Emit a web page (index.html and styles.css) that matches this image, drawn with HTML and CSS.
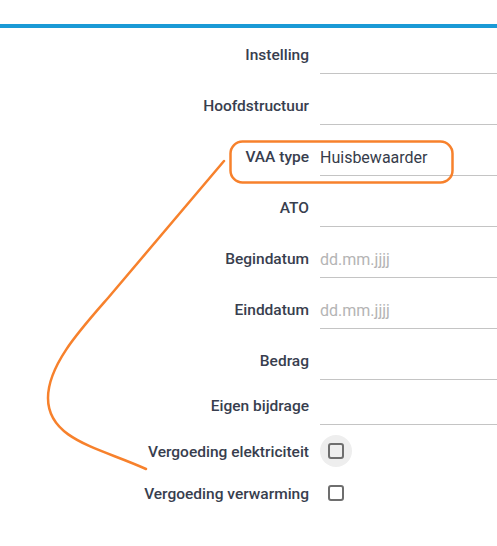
FILE: index.html
```html
<!DOCTYPE html>
<html lang="nl">
<head>
<meta charset="utf-8">
<title>VAA formulier</title>
<link rel="stylesheet" href="styles.css">
</head>
<body>
<div class="page">
  <div class="topbar"></div>
  <form class="form">
    <div class="field">
      <label class="label" for="f1">Instelling</label>
      <input class="input" id="f1" type="text">
    </div>
    <div class="field">
      <label class="label" for="f2">Hoofdstructuur</label>
      <input class="input" id="f2" type="text">
    </div>
    <div class="field">
      <label class="label" for="f3">VAA type</label>
      <input class="input" id="f3" type="text" value="Huisbewaarder">
    </div>
    <div class="field">
      <label class="label" for="f4">ATO</label>
      <input class="input" id="f4" type="text">
    </div>
    <div class="field">
      <label class="label" for="f5">Begindatum</label>
      <input class="input" id="f5" type="text" placeholder="dd.mm.jjjj">
    </div>
    <div class="field">
      <label class="label" for="f6">Einddatum</label>
      <input class="input" id="f6" type="text" placeholder="dd.mm.jjjj">
    </div>
    <div class="field">
      <label class="label" for="f7">Bedrag</label>
      <input class="input" id="f7" type="text">
    </div>
    <div class="field field--tight">
      <label class="label" for="f8">Eigen bijdrage</label>
      <input class="input" id="f8" type="text">
    </div>
    <div class="field field--check">
      <label class="label" for="f9">Vergoeding elektriciteit</label>
      <span class="check-wrap check-wrap--hover"><input class="check" id="f9" type="checkbox"></span>
    </div>
    <div class="field field--check">
      <label class="label" for="f10">Vergoeding verwarming</label>
      <span class="check-wrap"><input class="check" id="f10" type="checkbox"></span>
    </div>
  </form>
  <svg class="annotation" width="497" height="546" viewBox="0 0 497 546" aria-hidden="true">
    <rect x="230.5" y="141.5" width="222" height="41" rx="12" ry="12" fill="none" stroke="#f7812c" stroke-width="2.5"/>
    <path d="M224,161 L108,298 C80,330 48,365 48,398 C48,440 100,448 146,469" fill="none" stroke="#f7812c" stroke-width="2.5" stroke-linecap="round"/>
  </svg>
</div>
</body>
</html>
```
FILE: styles.css
```css
html, body {
  margin: 0;
  padding: 0;
  background: #ffffff;
}

body {
  font-family: Roboto, "Liberation Sans", Arial, sans-serif;
  color: #3c4252;
}

.page {
  position: relative;
  width: 497px;
  min-height: 546px;
  overflow: hidden;
}

.topbar {
  margin-top: 24px;
  height: 4px;
  background: #1a9ad6;
}

.form {
  display: flex;
  flex-direction: column;
  padding-top: 10px;
  margin: 0;
}

.field {
  display: grid;
  grid-template-columns: 309px 1fr;
  column-gap: 11px;
  align-items: center;
  height: 36px;
  margin-bottom: 15px;
}

.field--tight {
  margin-top: -6px;
  margin-bottom: 10px;
}

.field--check {
  height: 32px;
  margin-bottom: 10px;
}

.label {
  justify-self: end;
  font-size: 15.5px;
  font-weight: 500;
  color: #383e4e;
  white-space: nowrap;
  margin-top: -2px;
}

.field--check .label {
  margin-top: 1px;
}

.input {
  box-sizing: border-box;
  width: 100%;
  height: 36px;
  border: none;
  border-bottom: 1px solid #c4c4c4;
  padding: 0;
  margin: 0;
  background: transparent;
  font-family: Roboto, "Liberation Sans", Arial, sans-serif;
  font-size: 16px;
  color: #363c4a;
  outline: none;
}

.input::placeholder {
  color: #b4b4b4;
  opacity: 1;
}

.check-wrap {
  display: flex;
  align-items: center;
  justify-content: center;
  width: 32px;
  height: 32px;
  border-radius: 50%;
}

.check-wrap--hover {
  background: #eeeeee;
}

.check {
  appearance: none;
  -webkit-appearance: none;
  box-sizing: border-box;
  width: 16px;
  height: 16px;
  margin: 0;
  border: 2px solid #6e6e6e;
  border-radius: 3px;
  background: transparent;
}

.annotation {
  position: absolute;
  top: 0;
  left: 0;
  pointer-events: none;
}
```
